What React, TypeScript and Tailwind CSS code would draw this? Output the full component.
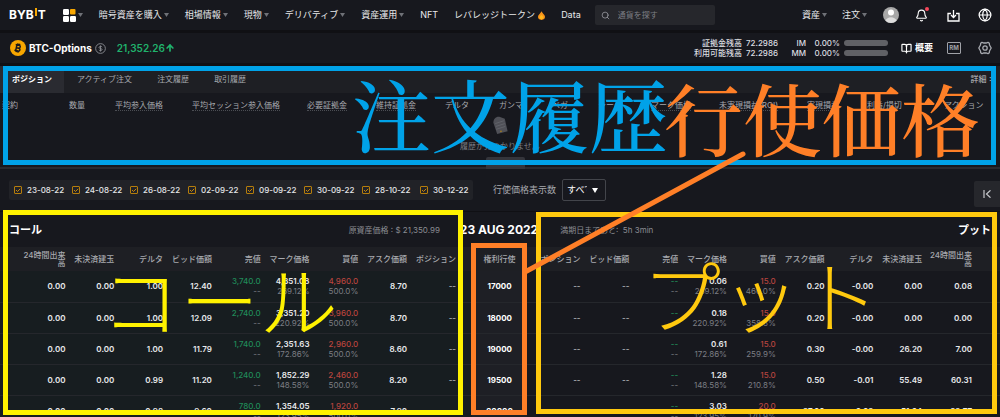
import React from "react";
import { Bell, Globe, Search, BookOpen, ArrowUp } from "lucide-react";

const mainNav: { label: string; caret?: boolean; hot?: boolean }[] = [
  { label: "暗号資産を購入", caret: true },
  { label: "相場情報", caret: true },
  { label: "現物", caret: true },
  { label: "デリバティブ", caret: true },
  { label: "資産運用", caret: true },
  { label: "NFT" },
  { label: "レバレッジトークン", hot: true },
  { label: "Data" },
];

const tabs = ["ポジション", "アクティブ注文", "注文履歴", "取引履歴"];

const positionColumns: [string, string, boolean][] = [
  ["契約", "w-[6.7%]", false],
  ["数量", "w-[4.6%]", false],
  ["平均参入価格", "w-[7.7%]", true],
  ["平均セッション参入価格", "w-[11.5%]", true],
  ["必要証拠金", "w-[6.9%]", true],
  ["維持証拠金", "w-[6.9%]", true],
  ["デルタ", "w-[5.4%]", false],
  ["ガンマ", "w-[5.3%]", false],
  ["ベガ", "w-[4.6%]", false],
  ["シータ", "w-[5.3%]", false],
  ["マーク価格", "w-[6.8%]", true],
  ["未実現損益(ROI)", "w-[8.8%]", true],
  ["実現損益", "w-[6%]", true],
  ["利益/損切", "w-[7.7%]", false],
  ["アクション", "w-[5.8%]", false],
];

const dates = ["23-08-22", "24-08-22", "26-08-22", "02-09-22", "09-09-22", "30-09-22", "28-10-22", "30-12-22"];

type Quote = { delta: string; bid: string; sell: string; mark: string; iv: string; buy: string; buyIv: string; ask: string; oi: string; vol: string };
type Row = { strike: string; call: Quote; put: Quote };

const rows: Row[] = [
  {
    strike: "17000",
    call: { vol: "0.00", oi: "0.00", delta: "1.00", bid: "12.40", sell: "3,740.0", mark: "4,351.08", iv: "269.12%", buy: "4,960.0", buyIv: "500.0%", ask: "8.70" },
    put: { vol: "0.08", oi: "0.00", delta: "-0.00", bid: "--", sell: "--", mark: "0.06", iv: "269.12%", buy: "15.0", buyIv: "460.0%", ask: "0.20" },
  },
  {
    strike: "18000",
    call: { vol: "0.00", oi: "0.00", delta: "1.00", bid: "12.09", sell: "2,740.0", mark: "3,351.20", iv: "220.92%", buy: "3,960.0", buyIv: "500.0%", ask: "8.70" },
    put: { vol: "0.00", oi: "0.00", delta: "-0.00", bid: "--", sell: "--", mark: "0.18", iv: "220.92%", buy: "15.0", buyIv: "358.8%", ask: "0.20" },
  },
  {
    strike: "19000",
    call: { vol: "0.00", oi: "0.00", delta: "1.00", bid: "11.79", sell: "1,740.0", mark: "2,351.63", iv: "172.86%", buy: "2,960.0", buyIv: "500.0%", ask: "8.60" },
    put: { vol: "7.00", oi: "26.20", delta: "-0.00", bid: "--", sell: "--", mark: "0.61", iv: "172.86%", buy: "15.0", buyIv: "259.9%", ask: "0.30" },
  },
  {
    strike: "19500",
    call: { vol: "0.00", oi: "0.00", delta: "0.99", bid: "11.20", sell: "1,240.0", mark: "1,852.29", iv: "148.58%", buy: "2,460.0", buyIv: "500.0%", ask: "8.20" },
    put: { vol: "60.31", oi: "55.49", delta: "-0.01", bid: "--", sell: "--", mark: "1.28", iv: "148.58%", buy: "15.0", buyIv: "210.8%", ask: "0.50" },
  },
  {
    strike: "20000",
    call: { vol: "0.00", oi: "0.00", delta: "0.98", bid: "9.60", sell: "780.0", mark: "1,354.05", iv: "123.95%", buy: "1,920.0", buyIv: "500.0%", ask: "7.90" },
    put: { vol: "32.77", oi: "51.64", delta: "-0.02", bid: "--", sell: "--", mark: "3.03", iv: "123.95%", buy: "20.0", buyIv: "170.9%", ask: "27.00" },
  },
];

function Caret() {
  return (
    <svg viewBox="0 0 5 4" className="ml-[2px] h-1 w-[5px] fill-[#6f7177]" aria-hidden="true">
      <path d="M0 0h5L2.5 4z" />
    </svg>
  );
}

function Header() {
  return (
    <header className="flex h-[30px] items-center pl-[9px] pr-2 text-[9px] leading-3 text-[#e8e9eb]">
      <a href="#home" aria-label="BYBIT" className="flex items-center text-[12px] font-bold leading-3 text-white">
        BYB
        <span className="mx-px mb-[6px] h-2 w-[2px] bg-[#f7a600]" />T
      </a>
      <button type="button" aria-label="アプリ一覧" className="ml-[17px] flex items-center">
        <svg viewBox="0 0 13 13" className="h-[13px] w-[13px]">
          <rect width="6" height="6" rx="1.2" fill="#fff" />
          <rect x="7" width="5.5" height="5.5" rx="1" fill="#f7a600" />
          <rect y="7" width="6" height="6" rx="1.2" fill="#fff" />
          <rect x="7" y="7" width="6" height="6" rx="1.2" fill="#fff" />
        </svg>
        <Caret />
      </button>
      <nav className="ml-4 flex items-center gap-4 whitespace-nowrap">
        {mainNav.map((n) => (
          <a key={n.label} href="#nav" className="flex items-center">
            {n.label}
            {n.caret && <Caret />}
            {n.hot && (
              <svg viewBox="0 0 8 10" className="ml-[3px] h-[9px] w-[7px]" aria-hidden="true">
                <path d="M4 0C4.600 2 8 4 8 6.500A4 3.500 0 0 1 0 6.500C0 4 3.400 2 4 0z" fill="#f7931a" />
                <path d="M4 4c.6 1 2.200 1.800 2.200 3a2.200 2.200 0 0 1-4.400 0c0-1.200 1.600-2 2.200-3z" fill="#ffb81c" />
              </svg>
            )}
          </a>
        ))}
      </nav>
      <label className="ml-[14px] flex h-5 w-[120px] items-center gap-2 rounded-[2px] bg-[#26272c] px-[6px]">
        <Search className="h-[9px] w-[9px] shrink-0 text-[#a0a2a8]" />
        <input type="search" aria-label="通貨を探す" placeholder="通貨を探す" className="w-full min-w-0 bg-transparent text-[8px] outline-none placeholder:text-[#7c7e84]" />
      </label>
      <div className="ml-auto flex items-center whitespace-nowrap">
        <button type="button" className="flex items-center">資産<Caret /></button>
        <button type="button" className="ml-[15px] flex items-center">注文<Caret /></button>
        <button type="button" aria-label="アカウント" className="ml-4">
          <svg viewBox="0 0 16 16" className="h-4 w-4">
            <circle cx="8" cy="8" r="8" fill="#a8a8a8" />
            <circle cx="8" cy="5.500" r="3" fill="#fff" />
            <path d="M2.500 13.800a5.800 5.200 0 0 1 11 0A8 8 0 0 1 2.500 13.800z" fill="#dedede" />
          </svg>
        </button>
        <button type="button" aria-label="通知" className="relative ml-4">
          <Bell className="h-[13px] w-[13px] text-white" />
          <span className="absolute -right-px -top-[2px] h-1 w-1 rounded-full bg-[#f5475b]" />
        </button>
        <button type="button" aria-label="ダウンロード" className="ml-[19px]">
          <svg viewBox="0 0 13 13" className="h-[13px] w-[13px]" fill="none" stroke="#fff" strokeWidth="1.300">
            <path d="M4 4.500H1v7.500h11V4.500H9M6.500 1v7M4 6l2.500 2.500L9 6" />
          </svg>
        </button>
        <button type="button" aria-label="言語" className="ml-[18px]">
          <Globe className="h-[14px] w-[14px] text-white" />
        </button>
      </div>
    </header>
  );
}

function MarginLine({ label, code }: { label: string; code: string }) {
  return (
    <div className="flex h-[10px] items-center">
      <span className="w-12 text-right">{label}</span>
      <span className="ml-1 w-[31px]">72.2986</span>
      <span className="w-[29px] text-right">{code}</span>
      <span className="w-[34px] text-right">0.00%</span>
      <span className="ml-1 h-[6px] w-[44px] rounded-full bg-[#606166]" />
    </div>
  );
}

function SymbolBar() {
  return (
    <section className="flex h-[30px] items-center pl-[10px] pr-2">
      <svg viewBox="0 0 16 16" className="h-4 w-4" aria-hidden="true">
        <circle cx="8" cy="8" r="8" fill="#f7a600" />
        <g transform="rotate(12 8 8)" fill="none" stroke="#17181e" strokeWidth="1.500">
          <path d="M5 5h3.500a1.500 1.500 0 0 1 0 3H6.300h2.500a1.500 1.500 0 0 1 0 3H5M6.300 5v6M7 3.500V5M8.800 3.500V5M7 11v1.500M8.800 11v1.500" />
        </g>
      </svg>
      <h1 className="ml-[3px] text-[10px] font-bold leading-3 text-white">BTC-Options</h1>
      <svg viewBox="0 0 12 12" className="ml-[3px] h-[11px] w-[11px]" fill="none" stroke="#8b8d93" strokeWidth="1" aria-hidden="true">
        <circle cx="6" cy="6" r="5.300" />
        <path d="M7.800 4.500C7.300 3.300 4.400 3.400 4.400 4.900s3.300.7 3.300 2.200-2.900 1.500-3.500.3M6 2.700v6.600" />
      </svg>
      <span className="ml-[11px] flex items-center text-[10px] font-semibold leading-3 text-[#20b26c]">
        21,352.26
        <ArrowUp className="h-[10px] w-[10px]" strokeWidth={4} />
      </span>
      <div className="ml-auto whitespace-nowrap text-[8px] font-medium leading-[10px] text-[#dcdde0]">
        <MarginLine label="証拠金残高" code="IM" />
        <MarginLine label="利用可能残高" code="MM" />
      </div>
      <button type="button" className="ml-[13px] flex items-center gap-[3px] text-[9px] font-bold leading-3 text-white">
        <BookOpen className="h-[11px] w-[11px]" strokeWidth={2.5} />
        概要
      </button>
      <button type="button" className="ml-[14px] flex h-3 w-[14px] items-center justify-center rounded-[1px] border border-[#a0a2a8] text-[6px] font-bold leading-none text-[#a0a2a8]">
        RM
      </button>
      <button type="button" aria-label="設定" className="ml-[17px]">
        <svg viewBox="0 0 14 14" className="h-[14px] w-[14px]" fill="none" stroke="#a8aab0" strokeWidth="1.300" strokeLinejoin="round">
          <path d="M4 1.300l1.500.7h3l1.500-.7 1.300 1 .2 1.700L13.200 7l-1.700 3-.2 1.700-1.300 1-1.500-.7h-3l-1.500.7-1.300-1L2.500 10 .8 7l1.700-3 .2-1.700z" />
          <circle cx="7" cy="7" r="2.200" />
        </svg>
      </button>
    </section>
  );
}

function Positions() {
  return (
    <section className="relative h-[103px] border-b-2 border-[#2a2b30]">
      <div role="tablist" className="flex h-[27px] items-stretch gap-px bg-[#1e1f24] text-[8px] text-[#a7a9ae]">
        {tabs.map((t, i) => (
          <button
            key={t}
            type="button"
            role="tab"
            aria-selected={i === 0}
            className={i === 0 ? "bg-[#2a2b31] px-3 pb-[2px] font-bold text-white" : "px-3 pb-[2px]"}
          >
            {t}
          </button>
        ))}
        <a href="#detail" className="ml-auto self-start px-[6px] pt-[7px] leading-3 text-[#c5c6ca]">詳細 &gt;</a>
      </div>
      <table className="w-full table-fixed text-[8px] leading-[10px] text-[#a7a9ae]">
        <thead>
          <tr className="h-[23px]">
            {positionColumns.map(([name, width, underlined]) => (
              <th key={name} scope="col" className={`${width} whitespace-nowrap p-0 pl-[2px] text-left font-normal`}>
                <span className={underlined ? "border-b border-dotted border-[#4b4d53]" : ""}>{name}</span>
              </th>
            ))}
          </tr>
        </thead>
      </table>
      <div className="flex flex-col items-center gap-[5px] text-[8px] leading-3 text-[#7c7e84]">
        <svg viewBox="0 0 17 20" className="h-[19px] w-[17px]" aria-hidden="true">
          <path d="M1 7C1 3 4 0 8 1l5 2 3 13-11 3z" fill="#4f5057" />
          <path d="M3 8l9-3M3.500 11l9.500-3M4 14l9.500-3" stroke="#66686f" strokeWidth=".8" />
          <circle cx="9" cy="16" r=".8" fill="#b8860b" />
        </svg>
        履歴が見つかりません
      </div>
      <span className="absolute -bottom-[2px] left-[48.6%] h-3 w-[39px] rounded-t-[2px] bg-[#34353b]" />
    </section>
  );
}

function Filters() {
  return (
    <section className="flex h-[43px] items-center border-b border-[#101014] pl-[9px]">
      <div className="flex h-5 items-center gap-[10px] rounded-[2px] bg-[#212227] px-[5px]">
        {dates.map((d) => (
          <label key={d} className="flex w-12 items-center gap-[5px] whitespace-nowrap text-[8px] font-medium leading-3 text-[#e4e5e7]">
            <span className="grid h-2 w-2 shrink-0">
              <input type="checkbox" defaultChecked className="col-start-1 row-start-1 h-2 w-2 appearance-none rounded-[1px] border border-[#b57d0c]" />
              <svg viewBox="0 0 8 8" className="pointer-events-none col-start-1 row-start-1 h-2 w-2" fill="none" stroke="#d8920a" strokeWidth=".9" aria-hidden="true">
                <path d="M2 4l1.500 1.500L6.200 2.800" />
              </svg>
            </span>
            {d}
          </label>
        ))}
      </div>
      <label htmlFor="strikes" className="ml-5 whitespace-nowrap text-[9px] leading-3 text-[#a7a9ae]">行使価格表示数</label>
      <span className="ml-[6px] grid w-[44px] grid-cols-[44px] items-center">
        <select id="strikes" className="col-start-1 row-start-1 h-[22px] w-[44px] appearance-none rounded-[2px] border border-[#43454b] bg-transparent pl-1 pr-[18px] text-[9px] text-white">
          <option>すべて</option>
        </select>
        <svg viewBox="0 0 6 5" className="pointer-events-none col-start-1 row-start-1 mr-2 h-[5px] w-[6px] justify-self-end fill-white" aria-hidden="true">
          <path d="M0 0h6L3 5z" />
        </svg>
      </span>
      <button type="button" aria-label="パネルを開く" className="mb-1 ml-auto flex h-[26px] w-[26px] items-center justify-center self-end rounded-l-[2px] bg-[#26272c]">
        <svg viewBox="0 0 8 8" className="h-2 w-2" fill="none" stroke="#c5c6ca" strokeWidth="1.200">
          <path d="M1 0v8M7.500 .3L3.500 4l4 3.700" />
        </svg>
      </button>
    </section>
  );
}

function Pair({ top, bottom, tone }: { top: string; bottom: string; tone: string }) {
  return (
    <>
      <span className={`block ${tone}`}>{top}</span>
      <span className="block font-normal text-[#7c7e84]">{bottom}</span>
    </>
  );
}

const cell = "p-0 pr-[6px] text-right whitespace-nowrap";
const callCell = "p-0 pr-[6px] text-right whitespace-nowrap bg-[#171d20]";
const dash = "text-[#a7a9ae]";

function Chain() {
  return (
    <section>
      <div className="flex h-[35px] items-center px-[9px] text-[12px] font-bold leading-4 text-white">
        <div className="flex flex-1 items-center justify-between pr-5">
          <h2 className="text-[11px]">コール</h2>
          <span className="text-[8px] font-normal text-[#8b8d93]">原資産価格 : $ 21,350.99</span>
        </div>
        <h2 className="whitespace-nowrap">23 AUG 2022</h2>
        <div className="flex flex-1 items-center justify-between pl-[22px]">
          <span className="text-[8px] font-normal text-[#8b8d93]">満期日まであと:&nbsp; 5h 3min</span>
          <h2 className="text-[11px]">プット</h2>
        </div>
      </div>
      <table className="w-full table-fixed text-[8px] font-semibold leading-[10px] text-[#e8e9eb]">
        <colgroup>
          <col className="w-[7.15%]" />
          <col span={7} className="w-[4.88%]" />
          <col className="w-[5.9%]" />
          <col className="w-[5.5%]" />
          <col className="w-[5.95%]" />
          <col span={7} className="w-[4.88%]" />
          <col className="w-[7.18%]" />
        </colgroup>
        <thead className="bg-[#1e1f24] text-[#a7a9ae]">
          <tr className="h-6 font-medium">
            <th scope="col" className="p-0 pl-5 pr-[6px] text-right font-medium leading-2">24時間出来高</th>
            {["未決済建玉", "デルタ", "ビッド価額", "売値", "マーク価格", "買値", "アスク価額"].map((h) => (
              <th key={h} scope="col" className={`${cell} font-medium`}>{h}</th>
            ))}
            <th scope="col" className="whitespace-nowrap p-0 pr-4 text-right font-medium">ポジション</th>
            <th scope="col" className="p-0 text-center font-medium">権利行使</th>
            {["ポジション", "ビッド価額", "売値", "マーク価格", "買値", "アスク価額", "デルタ", "未決済建玉"].map((h) => (
              <th key={h} scope="col" className={`${cell} font-medium`}>{h}</th>
            ))}
            <th scope="col" className="p-0 pr-[28px] text-right font-medium leading-2">24時間出来高</th>
          </tr>
        </thead>
        <tbody>
          {rows.map(({ strike, call, put }) => (
            <tr key={strike} className="h-[31px] border-b border-[#25272c]">
              <td className={callCell}>{call.vol}</td>
              <td className={callCell}>{call.oi}</td>
              <td className={callCell}>{call.delta}</td>
              <td className={callCell}>{call.bid}</td>
              <td className={callCell}><Pair top={call.sell} bottom="--" tone="font-medium text-[#208a58]" /></td>
              <td className={callCell}><Pair top={call.mark} bottom={call.iv} tone="" /></td>
              <td className={callCell}><Pair top={call.buy} bottom={call.buyIv} tone="font-medium text-[#b8443e]" /></td>
              <td className={callCell}>{call.ask}</td>
              <td className="bg-[#171d20] p-0 pr-4 text-right text-[#a7a9ae]">--</td>
              <th scope="row" className="bg-[#1e1f25] p-0 text-center font-bold text-white">{strike}</th>
              <td className={`${cell} ${dash}`}>--</td>
              <td className={`${cell} ${dash}`}>{put.bid}</td>
              <td className={cell}><Pair top={put.sell} bottom="--" tone="font-medium text-[#208a58]" /></td>
              <td className={cell}><Pair top={put.mark} bottom={put.iv} tone="" /></td>
              <td className={cell}><Pair top={put.buy} bottom={put.buyIv} tone="font-medium text-[#b8443e]" /></td>
              <td className={cell}>{put.ask}</td>
              <td className={cell}>{put.delta}</td>
              <td className={cell}>{put.oi}</td>
              <td className="p-0 pr-[28px] text-right">{put.vol}</td>
            </tr>
          ))}
        </tbody>
      </table>
    </section>
  );
}

function Annotations() {
  return (
    <div className="pointer-events-none absolute inset-0 whitespace-nowrap leading-[80px]">
      <div className="absolute left-[0.3%] right-[0.4%] top-[66px] h-[99px] border-[5px] border-[#00a2e8]" />
      <div className="absolute left-[0.3%] top-[210px] h-[205px] w-[46%] border-[5px] border-[#fff200]" />
      <div className="absolute left-[53.6%] right-[0.3%] top-[212px] h-[202px] border-[5px] border-[#ffc90e]" />
      <svg viewBox="0 0 1000 417" preserveAspectRatio="none" className="absolute left-0 top-0 h-[417px] w-full" aria-hidden="true">
        <path d="M743 154L525 272" stroke="#ff7f27" strokeWidth="5" strokeLinecap="round" />
      </svg>
      <div className="absolute left-[47.1%] top-[243px] h-[172px] w-[5.6%] border-[5px] border-[#ff7f27]" />
      <p className="absolute left-[35.2%] top-[73px] text-[79px] font-medium text-[#00a2e8] font-['Noto_Serif_CJK_JP','Noto_Sans_CJK_JP',serif]">注文履歴</p>
      <p className="absolute left-[66.4%] top-[77px] text-[79px] font-medium text-[#ff7f27] font-['Noto_Serif_CJK_JP','Noto_Sans_CJK_JP',serif]">行使価格</p>
      <p className="absolute left-[10.1%] top-[263px] text-[79px] font-light text-[#fff200]">コール</p>
      <p className="absolute left-[64.2%] top-[259px] text-[79px] font-light text-[#ffc90e]">プット</p>
    </div>
  );
}

export default function App() {
  return (
    <main lang="ja" className="relative h-screen overflow-hidden bg-[#17181e] font-['Inter','Noto_Sans_CJK_JP',sans-serif]">
      <Header />
      <div className="h-[3px] bg-[#101014]" />
      <SymbolBar />
      <div className="h-[3px] bg-[#101014]" />
      <Positions />
      <Filters />
      <Chain />
      <Annotations />
    </main>
  );
}
